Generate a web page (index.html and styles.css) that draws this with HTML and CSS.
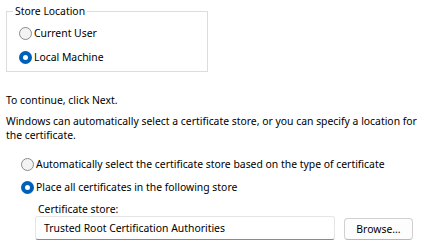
FILE: index.html
```html
<!DOCTYPE html>
<html lang="en">
<head>
    <meta charset="UTF-8">
    <title>Certificate Import Wizard</title>
    <link rel="stylesheet" href="styles.css">
</head>
<body>

<div class="page">
    <fieldset class="group">
        <legend>Store Location</legend>
        <div class="options">
            <label class="radio"><span class="dot"></span>Current User</label>
            <label class="radio"><span class="dot checked"></span>Local Machine</label>
        </div>
    </fieldset>

    <p class="hint">To continue, click Next.</p>
    <p class="text">Windows can automatically select a certificate store, or you can specify a location for the certificate.</p>

    <div class="choices">
        <label class="radio"><span class="dot"></span>Automatically select the certificate store based on the type of certificate</label>
        <label class="radio"><span class="dot checked"></span>Place all certificates in the following store</label>
    </div>

    <div class="store">
        <div class="store-label">Certificate store:</div>
        <div class="store-row">
            <div class="field">Trusted Root Certification Authorities</div>
            <button class="btn">Browse...</button>
        </div>
    </div>
</div>

</body>
</html>
```

FILE: styles.css
```css
body {
    margin: 0;
    background-color: #ffffff;
    color: #000000;
    font-family: 'Noto Sans', 'Open Sans', sans-serif;
    font-size: 10.4px;
}
.page {
    padding: 3px 0 0 6px;
}
.group {
    width: 188px;
    margin: 0;
    padding: 0 6px 6px 6px;
    border: 1px solid #dcdcdc;
}
.group legend {
    padding: 0 2px;
    line-height: 16px;
}
.options {
    display: flex;
    flex-direction: column;
    gap: 8px;
    padding: 6px 0 0 6px;
}
.radio {
    display: flex;
    align-items: center;
    gap: 2px;
    height: 16px;
    line-height: 16px;
    white-space: nowrap;
}
.dot {
    box-sizing: border-box;
    flex: none;
    width: 13px;
    height: 13px;
    border-radius: 50%;
    border: 1px solid #8a8a8a;
    background-color: #f3f3f3;
}
.dot.checked {
    border: 4px solid #005fb8;
    background-color: #ffffff;
}
.hint {
    margin: 21px 0 0 0;
    line-height: 14px;
}
.text {
    margin: 7px 0 0 0;
    line-height: 14px;
}
.choices {
    display: flex;
    flex-direction: column;
    gap: 7px;
    margin-top: 14px;
    padding-left: 15px;
}
.store {
    margin-top: 7px;
    padding-left: 29px;
}
.store-label {
    padding-left: 3px;
    line-height: 14px;
}
.store-row {
    display: flex;
    align-items: flex-start;
    gap: 9px;
}
.field {
    box-sizing: border-box;
    width: 300px;
    height: 24px;
    padding: 0 8px;
    line-height: 22px;
    border: 1px solid #e5e5e5;
    border-bottom-color: #8a8a8a;
    border-radius: 3px;
}
.btn {
    box-sizing: border-box;
    margin-top: 2px;
    width: 69px;
    height: 22px;
    padding: 0;
    font-family: inherit;
    font-size: 10.4px;
    color: #000000;
    background-color: #fdfdfd;
    border: 1px solid #d0d0d0;
    border-bottom-color: #b8b8b8;
    border-radius: 4px;
}
```
